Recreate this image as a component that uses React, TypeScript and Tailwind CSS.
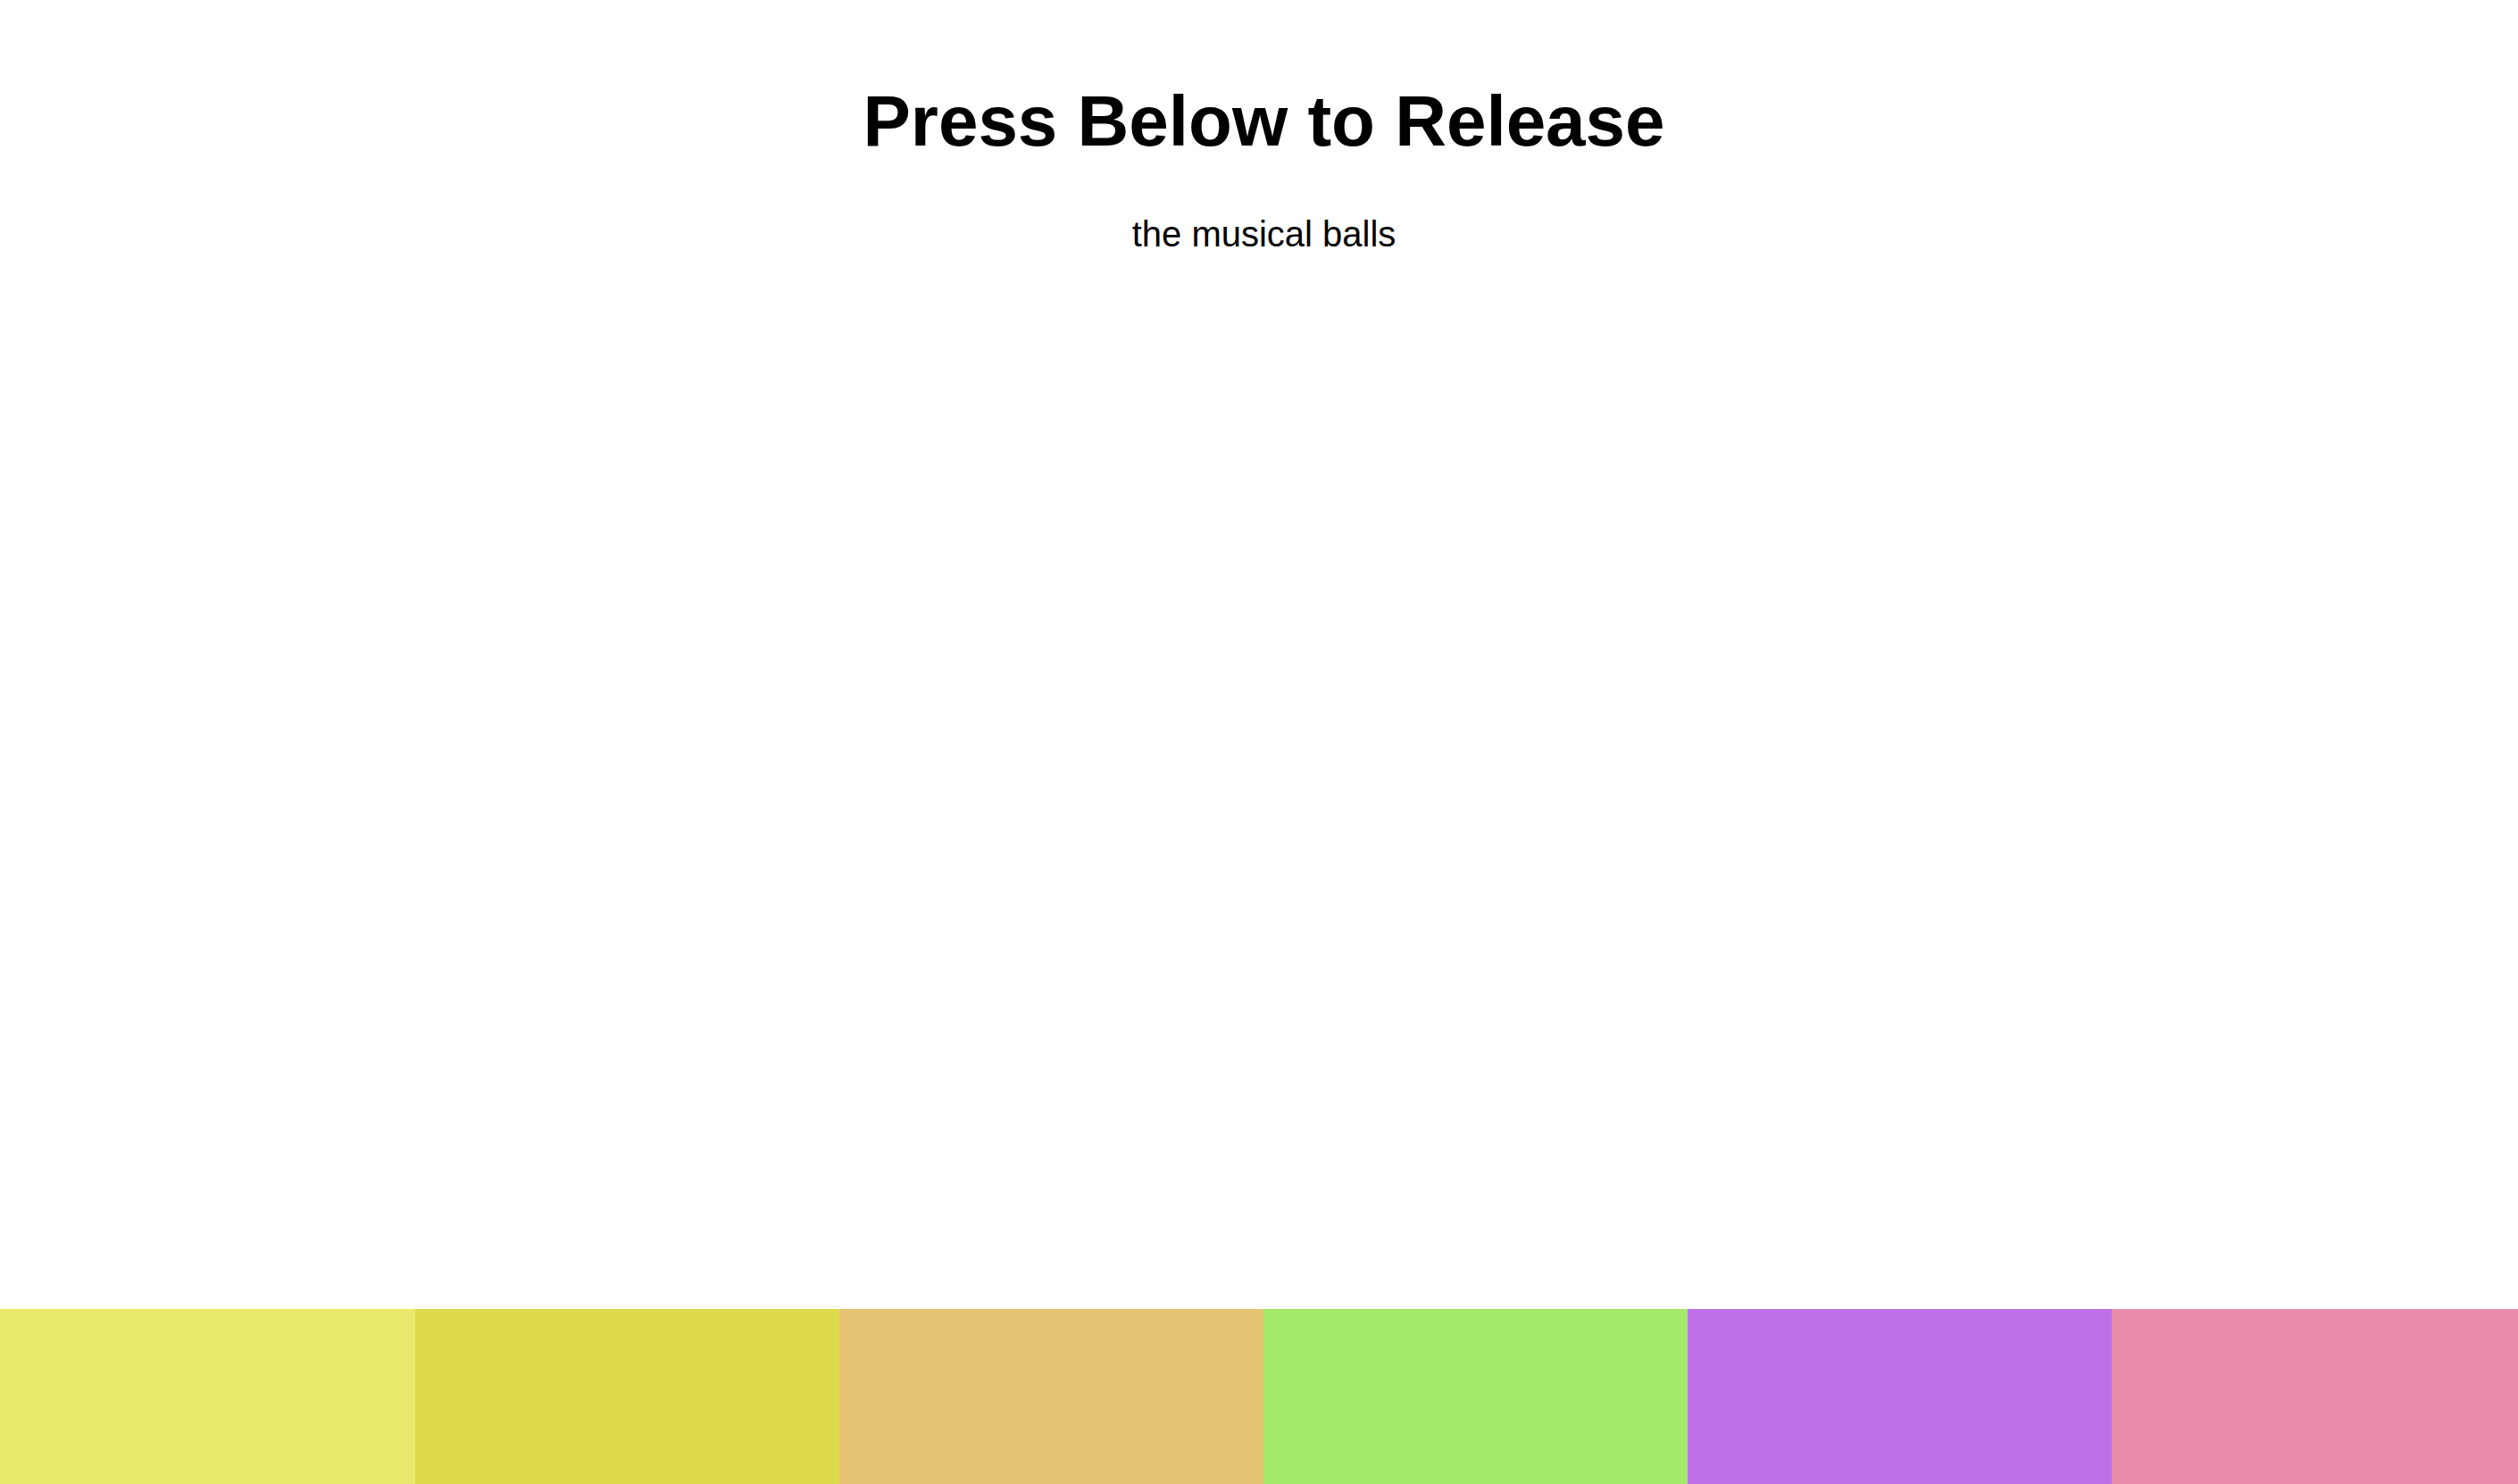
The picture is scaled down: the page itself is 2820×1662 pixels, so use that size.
import React from 'react';

const bars = [
  { w: 'w-[465px]', c: 'bg-[#e9ea6d]' },
  { w: 'w-[475px]', c: 'bg-[#dcd94a]' },
  { w: 'w-[475px]', c: 'bg-[#e5c574]' },
  { w: 'w-[475px]', c: 'bg-[#a5e96a]' },
  { w: 'w-[475px]', c: 'bg-[#be70e9]' },
  { w: 'flex-1', c: 'bg-[#e78ba9]' },
];

export default function App() {
  return (
    <div className="h-screen w-full bg-white flex flex-col overflow-hidden font-['Liberation_Sans',Arial,sans-serif] text-black">
      <div className="flex-1 flex flex-col items-center pl-[11px]">
        <h1 className="mt-[96px] text-[80px] leading-none font-bold">Press Below to Release</h1>
        <p className="mt-[66px] text-[40px] leading-none">the musical balls</p>
      </div>
      {/* release pads */}
      <div className="flex h-[196px] shrink-0">
        {bars.map((b, i) => (
          <div key={i} className={`${b.w} ${b.c} h-full`} />
        ))}
      </div>
    </div>
  );
}
